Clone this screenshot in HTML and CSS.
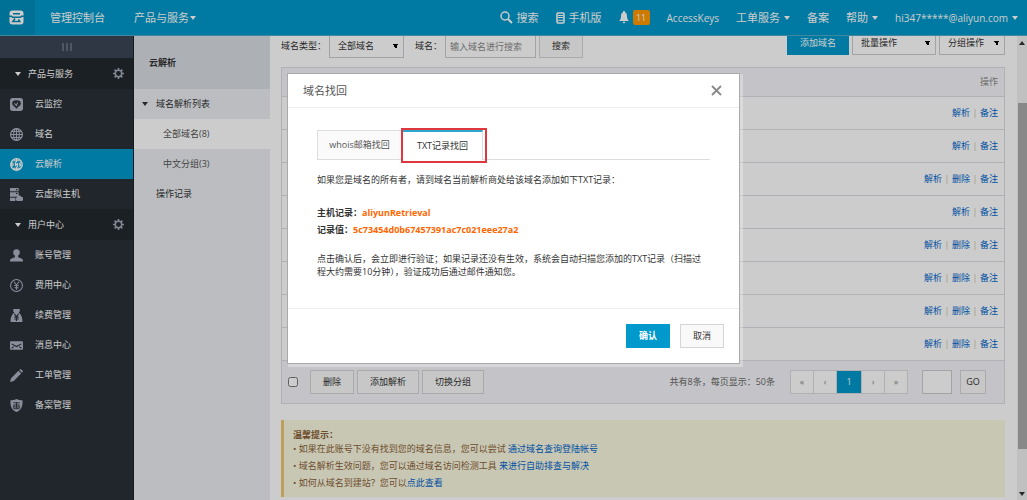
FILE: index.html
```html
<!DOCTYPE html>
<html lang="zh-CN">
<head>
<meta charset="utf-8">
<title>云解析</title>
<link rel="stylesheet" href="styles.css">
</head>
<body>
<header class="topbar">
  <a class="logo" href="#" aria-label="首页"><svg width="15" height="15" viewBox="0 0 15 15"><rect x=".5" y=".5" width="14" height="14" rx="3" fill="#fff"/><path d="M4 3.700h7M0 6.300h2.500l1 1h8l1-1H15M6 8.500l-2.200 3h7L9.500 9.300" fill="none" stroke="#0088b5" stroke-width="1.500"/></svg></a>
  <a class="nav-home" href="#">管理控制台</a>
  <a class="nav-products" href="#">产品与服务<i class="caret"></i></a>
  <nav class="top-right">
    <a href="#"><svg width="13" height="13" viewBox="0 0 13 13" fill="none" stroke="#fff"><circle cx="5" cy="5" r="4" stroke-width="1.500"/><path d="M8 8l4 4" stroke-width="2"/></svg>搜索</a>
    <a href="#"><svg width="9" height="12" viewBox="0 0 9 12"><rect x="1" y="1" width="7" height="10" rx="1" fill="none" stroke="#fff" stroke-width="1.600"/><path d="M2 3.500h5M2 5.500h5M2 8.300h5" stroke="#fff"/></svg>手机版</a>
    <a href="#"><svg width="10" height="13" viewBox="0 0 10 13" fill="#fff"><path d="M5 0a1 1 0 0 1 1 1.200C7.800 2 8 3.600 8 5.500 8 8 9 9 10 10H0c1-1 2-2 2-4.500C2 3.600 2.200 2 4 1.200A1 1 0 0 1 5 0zM3.700 10.700h2.600a1.300 1.500 0 0 1-2.600 0z"/></svg><span class="badge">11</span></a>
    <a href="#" class="latin">AccessKeys</a>
    <a href="#">工单服务<i class="caret"></i></a>
    <a href="#">备案</a>
    <a href="#">帮助<i class="caret"></i></a>
    <a href="#" class="latin">hi347*****@aliyun.com<i class="caret"></i></a>
  </nav>
</header>
<div class="layout">
  <aside class="sidebar">
    <button class="fold" aria-label="收起"><svg width="10" height="8" viewBox="0 0 10 8"><path d="M1 0v8M5 0v8M9 0v8" stroke="#8b96a8"/></svg></button>
    <h2><i class="caret"></i>产品与服务<svg class="gear" width="11" height="11" viewBox="0 0 11 11" fill="none" stroke="#a0abb8"><circle cx="5.500" cy="5.500" r="3.200" stroke-width="1.500"/><path d="M5.500 0v2M5.500 9v2M0 5.500h2M9 5.500h2M1.600 1.600l1.500 1.500M7.900 7.900l1.500 1.500M1.600 9.400l1.500-1.500M7.900 3.100l1.500-1.500" stroke-width="1.600"/></svg></h2>
    <a href="#"><svg viewBox="0 0 12 12"><rect width="12" height="12" rx="2.500" fill="#aab3c2"/><path d="M2 5a4 3 0 0 1 8 0c0 2-3 3-4 5-1-2-4-3-4-5z" fill="#293038"/><path d="M4 5l2 2 1-3" stroke="#aab3c2" fill="none"/></svg>云监控</a>
    <a href="#"><svg viewBox="0 0 12 12" fill="none" stroke="#aab3c2"><circle cx="6" cy="6" r="5.400" stroke-width="1.200"/><ellipse cx="6" cy="6" rx="2.600" ry="5.400"/><path d="M.6 6h10.800M6 .6v10.800M1.500 3.300h9M1.500 8.700h9"/></svg>域名</a>
    <a href="#" class="active"><svg viewBox="0 0 12 12"><circle cx="6" cy="6" r="5.300" fill="none" stroke="#fff" stroke-width="1.200"/><path d="M3 2.500h6M3 9.500h6M6 1v3M6 8v3" stroke="#fff"/><path d="M1.500 4.500v3c2 0 2-3 0-3M5 7.500v-3l2 3v-3M10.500 4.500C8 4.500 8.500 6 9.500 6s1 1.500-1 1.500" stroke="#fff" fill="none"/></svg>云解析</a>
    <a href="#"><svg viewBox="0 0 12 12" fill="#aab3c2"><path d="M0 0h8v3H0zM0 4h8v2.500L6 8H0zM0 9h5v3H0zM6.500 12a2 2 0 0 1-.2-3.500 2 2 0 0 1 3.900-.5A2 2 0 0 1 10.500 12z"/><path d="M5.500 1.500H7M5.500 5H7" stroke="#293038"/></svg>云虚拟主机</a>
    <h2><i class="caret"></i>用户中心<svg class="gear" width="11" height="11" viewBox="0 0 11 11" fill="none" stroke="#a0abb8"><circle cx="5.500" cy="5.500" r="3.200" stroke-width="1.500"/><path d="M5.500 0v2M5.500 9v2M0 5.500h2M9 5.500h2M1.600 1.600l1.500 1.500M7.900 7.900l1.500 1.500M1.600 9.400l1.500-1.500M7.900 3.100l1.500-1.500" stroke-width="1.600"/></svg></h2>
    <a href="#"><svg viewBox="0 0 12 12" fill="#aab3c2"><circle cx="6" cy="3.200" r="3"/><path d="M4.500 5h3v2.500L11 9c1 .5 1 1.500 1 2.500H0C0 10.500 0 9.500 1 9l3.500-1.500z"/></svg>账号管理</a>
    <a href="#"><svg viewBox="0 0 12 12" fill="none" stroke="#aab3c2"><circle cx="6" cy="6" r="5.500"/><path d="M3.700 2.500L6 5.500l2.300-3M6 5.500V10M4 6h4M4 8h4"/></svg>费用中心</a>
    <a href="#"><svg viewBox="0 0 12 12"><path d="M3 0h6v2L8 3.500c2 1 3.500 4 3.500 8.500H.5C.5 7.500 2 4.500 4 3.500L3 2z" fill="#aab3c2"/><path d="M4 4.500l2 2.500 2-2.500M6 7v4M4 7.500h4M4 9.300h4" stroke="#293038" fill="none"/></svg>续费管理</a>
    <a href="#"><svg viewBox="0 0 12 12"><rect y="2" width="12" height="8" rx="1" fill="#aab3c2"/><path d="M1.500 4.500L6 7l4.500-2.500M1.500 8.500l2-1.500M10.500 8.500l-2-1.500" stroke="#293038" fill="none"/></svg>消息中心</a>
    <a href="#"><svg viewBox="0 0 12 12" fill="#aab3c2"><path d="M0 12l1-3.500L7.800 1.700l2.500 2.500L3.500 11zM8.500 1l1-.8c.6-.4 2.700 1.600 2.300 2.300l-.8 1z"/></svg>工单管理</a>
    <a href="#"><svg viewBox="0 0 12 12"><path d="M6 0c2 1 4 1.200 5.500 1.200C12 6 10.500 10.500 6 12 1.500 10.500 0 6 .5 1.200 2 1.200 4 1 6 0z" fill="#aab3c2"/><path d="M3 3.500h6M3.500 5.500h5v3.500h-5zM6 3v6M3.500 7.300h5" stroke="#293038" stroke-width=".8" fill="none"/></svg>备案管理</a>
  </aside>
  <nav class="subnav">
    <h1>云解析</h1>
    <a href="#" class="group"><i class="caret"></i>域名解析列表</a>
    <a href="#" class="leaf current">全部域名(8)</a>
    <a href="#" class="leaf">中文分组(3)</a>
    <a href="#">操作记录</a>
  </nav>
  <main class="main">
    <div class="toolbar">
      <form class="filters">
        <label for="type">域名类型：</label>
        <select id="type"><option>全部域名</option></select>
        <label class="name-label" for="name">域名：</label>
        <input id="name" type="text" placeholder="输入域名进行搜索">
        <button type="button" class="btn">搜索</button>
      </form>
      <div class="actions">
        <button class="btn primary">添加域名</button>
        <select aria-label="批量操作" class="batch"><option>批量操作</option></select>
        <select aria-label="分组操作" class="grouping"><option>分组操作</option></select>
      </div>
    </div>
    <section class="panel">
      <table>
        <thead><tr><th>操作</th></tr></thead>
        <tbody>
          <tr><td><a href="#">解析</a><i>|</i><a href="#">备注</a></td></tr>
          <tr><td><a href="#">解析</a><i>|</i><a href="#">备注</a></td></tr>
          <tr><td><a href="#">解析</a><i>|</i><a href="#">删除</a><i>|</i><a href="#">备注</a></td></tr>
          <tr><td><a href="#">解析</a><i>|</i><a href="#">备注</a></td></tr>
          <tr><td><a href="#">解析</a><i>|</i><a href="#">删除</a><i>|</i><a href="#">备注</a></td></tr>
          <tr><td><a href="#">解析</a><i>|</i><a href="#">删除</a><i>|</i><a href="#">备注</a></td></tr>
          <tr><td><a href="#">解析</a><i>|</i><a href="#">删除</a><i>|</i><a href="#">备注</a></td></tr>
          <tr><td><a href="#">解析</a><i>|</i><a href="#">删除</a><i>|</i><a href="#">备注</a></td></tr>
        </tbody>
      </table>
      <div class="table-foot">
        <input type="checkbox" aria-label="全选">
        <div class="bulk">
          <button class="btn">删除</button>
          <button class="btn">添加解析</button>
          <button class="btn">切换分组</button>
        </div>
        <span class="summary">共有8条，每页显示：50条</span>
        <div class="pager">
          <button>«</button><button>‹</button><button class="on">1</button><button>›</button><button>»</button>
        </div>
        <input class="page-input" type="text" aria-label="页码">
        <button class="btn go">GO</button>
      </div>
    </section>
    <section class="notice">
      <h3>温馨提示：</h3>
      <ul>
        <li>如果在此账号下没有找到您的域名信息，您可以尝试 <a href="#">通过域名查询登陆帐号</a></li>
        <li>域名解析生效问题，您可以通过域名访问检测工具 <a href="#">来进行自助排查与解决</a></li>
        <li>如何从域名到建站？您可以<a href="#">点此查看</a></li>
      </ul>
    </section>
  </main>
  <div class="scrollbar"><i class="arrow up"></i><div class="thumb"></div><i class="arrow down"></i></div>
</div>
<div class="overlay">
  <section class="modal" role="dialog" aria-labelledby="dialog-title">
    <div class="modal-head">
      <h2 id="dialog-title">域名找回</h2>
      <button class="close" aria-label="关闭"><svg width="11" height="11" viewBox="0 0 11 11"><path d="M1 1l9 9M10 1l-9 9" stroke="#888" stroke-width="1.800"/></svg></button>
    </div>
    <div class="modal-body">
      <div class="tabs" role="tablist">
        <button role="tab" class="tab">whois邮箱找回</button>
        <div class="marked"><button role="tab" class="tab selected" aria-selected="true">TXT记录找回</button></div>
      </div>
      <p>如果您是域名的所有者，请到域名当前解析商处给该域名添加如下TXT记录：</p>
      <dl>
        <div><dt>主机记录：</dt><dd>aliyunRetrieval</dd></div>
        <div><dt>记录值：</dt><dd>5c73454d0b67457391ac7c021eee27a2</dd></div>
      </dl>
      <p class="hint">点击确认后，会立即进行验证；如果记录还没有生效，系统会自动扫描您添加的TXT记录（扫描过程大约需要10分钟），验证成功后通过邮件通知您。</p>
    </div>
    <div class="modal-foot">
      <button class="btn primary confirm">确认</button>
      <button class="btn cancel">取消</button>
    </div>
  </section>
</div>
</body>
</html>
```
FILE: styles.css
```css
* { box-sizing: border-box; }
body {
  margin: 0;
  height: 100vh;
  display: flex;
  flex-direction: column;
  overflow: hidden;
  background: #fff;
  color: #333;
  font: 9px/12px "Open Sans", "Noto Sans CJK SC", sans-serif;
}
a { color: #06c; text-decoration: none; }
h1, h2, h3, p, ul, dl, dd { margin: 0; padding: 0; }
i { font-style: normal; }
button, input, select { font: inherit; color: inherit; margin: 0; border-radius: 0; }
button { padding: 0; border: 0; background: none; }
.caret {
  display: inline-block;
  border: 3px solid transparent;
  border-top: 4px solid currentColor;
  border-bottom: 0;
}

.topbar {
  flex: none;
  height: 36px;
  display: flex;
  align-items: center;
  position: relative;
  z-index: 1;
  background: #09c;
  border-bottom: 1px solid #4eabc9;
  padding-right: 9px;
  font-size: 11px;
  white-space: nowrap;
}
.topbar a { color: #fff; display: flex; align-items: center; gap: 4px; }
.topbar .logo { width: 35px; height: 35px; padding-left: 9px; background: #008ebc; }
.topbar .latin { font-size: 10px; }
.nav-home { margin-left: 15px; }
.nav-products { margin-left: 29px; }
.topbar .nav-products { gap: 1px; }
.top-right { margin-left: auto; display: flex; align-items: center; gap: 17px; }
.badge { background: #f90; border-radius: 2px; height: 15px; line-height: 15px; width: 17px; font-size: 9px; text-align: center; }

.layout { flex: 1; min-height: 0; display: flex; }
.sidebar { flex: none; width: 134px; background: #293038; color: #fff; border-right: 1px solid #1c2026; }
.fold { display: flex; width: 100%; height: 22px; align-items: center; justify-content: center; background: #3b4556; }
.sidebar h2 {
  display: flex;
  align-items: center;
  height: 31px;
  padding: 0 9px 0 15px;
  background: #22282e;
  font-size: 9px;
  font-weight: 400;
}
.sidebar h2 .caret { margin-right: 7px; }
.gear { margin-left: auto; }
.sidebar a { display: flex; align-items: center; gap: 12px; height: 30px; padding-left: 10px; color: #fff; }
.sidebar a svg { width: 13px; height: 13px; }
.sidebar .active { background: #09c; }

.subnav { flex: none; width: 136px; background: #eaedf1; }
.subnav h1 { height: 53px; padding-left: 15px; line-height: 53px; font-size: 9px; font-weight: 700; background: #d9dee4; }
.subnav a { display: flex; align-items: center; height: 30px; padding-left: 22px; color: #333; }
.subnav .group { padding-left: 8px; gap: 8px; }
.subnav .leaf { padding-left: 29px; color: #555; }
.subnav .current { background: #fff; }

.main { flex: 1; min-width: 0; padding: 0 12px 0 11px; }
.toolbar { display: flex; justify-content: space-between; align-items: flex-start; height: 31px; }
.filters, .actions { display: flex; align-items: center; }
.filters { margin-top: -2px; }
.actions { margin-top: -5px; gap: 3px; }
.toolbar select, .toolbar input { height: 24px; border: 1px solid #ccc; background: #fff; padding: 0 8px; }
.toolbar select {
  appearance: none;
  width: 75px;
  background: linear-gradient(to bottom right, #000 50%, transparent 50%) right 5px center / 2px 5px no-repeat, linear-gradient(to bottom left, #000 50%, transparent 50%) right 7px center / 3px 5px no-repeat, #fff;
}
.toolbar .batch { width: 84px; }
.toolbar .grouping { width: 66px; }
.toolbar .filters input { width: 91px; padding: 0 4px; margin-left: 3px; }
.filters select { margin-left: 3px; }
.name-label { margin-left: 11px; }
.filters .btn { width: 44px; margin-left: 3px; }
.btn { height: 24px; border: 1px solid #d5d5d5; background: #f9f9f9; padding: 0 12px; }
.btn.primary { background: #09c; border-color: #09c; color: #fff; }
.actions .btn { width: 62px; }
input::placeholder { color: #888; opacity: 1; }

.panel { border: 1px solid #dcdde4; }
table { width: 100%; border-collapse: collapse; text-align: right; }
th { height: 28px; padding: 0 6px; background: #f5f6fa; color: #888; font-weight: 400; }
td { height: 33px; padding: 0 6px; border-top: 1px solid #dcdde4; }
td i { display: inline-block; width: 10px; text-align: center; color: #ccb9a4; }
.table-foot { display: flex; align-items: center; height: 43px; padding: 0 18px 0 6px; border-top: 1px solid #dcdde4; background: #f5f6fa; }
.table-foot [type="checkbox"] { width: 10px; height: 10px; }
.bulk { display: flex; gap: 3px; margin-left: 12px; }
.summary { margin-left: auto; color: #666; }
.pager { display: flex; margin: 0 14px 0 15px; border: 1px solid #ddd; border-right: 0; }
.pager button { width: 23px; height: 22px; border-right: 1px solid #ddd; background: #fff; color: #888; }
.pager .on { width: 25px; background: #09c; color: #fff; }
.page-input { width: 30px; height: 24px; border: 1px solid #ccc; background: #fff; }
.go { width: 26px; margin-left: 8px; padding: 0; }

.notice { margin-top: 16px; padding: 9px 9px 6px; border-left: 3px solid #efc773; background: #fbf9e1; color: #8a6238; }
.notice h3 { font-size: 9px; line-height: 11px; }
.notice ul { list-style: none; }
.notice li { line-height: 17px; }
.notice li::before { content: "• "; }

.scrollbar { flex: none; width: 10px; display: flex; flex-direction: column; align-items: center; background: #f1f1f1; padding: 5px 0 4px; }
.scrollbar .thumb { width: 9px; flex: 1; margin: 58px 0 43px; background: #aaa; }
.arrow { border: 3px solid transparent; }
.up { border-top: 0; border-bottom: 4px solid #333; }
.down { border-bottom: 0; border-top: 4px solid #333; }

.overlay { position: absolute; inset: 0; z-index: 2; padding: 73px 16px 0; background: rgba(0, 0, 0, .2); }
.modal { max-width: 453px; margin: 0 auto; background: #fff; border: 1px solid #aaa; box-shadow: 2px 2px 0 1px rgba(255, 255, 255, .3); }
.modal-head { display: flex; align-items: center; justify-content: space-between; height: 34px; padding: 0 17px 0 15px; border-bottom: 1px solid #eee; }
.modal-head h2 { font-size: 11px; font-weight: 400; color: #555; }
.close { display: flex; }
.modal-body { padding: 22px 29px 30px; }
.tabs { display: flex; height: 30px; border-bottom: 1px solid #ddd; }
.tab { width: 85px; height: 30px; border: 1px solid #ddd; background: #fafafa; color: #555; white-space: nowrap; }
.tab.selected { width: 81px; background: #fff; color: #333; border-top: 2px solid #2ba8cf; border-bottom: 0; }
.marked { position: relative; }
.marked::after { content: ""; position: absolute; inset: -2px -4px -4px -1px; border: 2px solid #e0373f; }
.modal-body p { margin-top: 14px; }
.modal-body dl { margin-top: 18px; font-weight: 700; line-height: 17px; }
.modal-body dl div { display: flex; }
.modal-body dd { color: #f60; }
.modal-body .hint { margin-top: 14px; line-height: 13px; }
.modal-foot { display: flex; justify-content: flex-end; gap: 10px; padding: 15px; border-top: 1px solid #eee; }
.modal-foot .btn { width: 44px; }
.confirm { font-weight: 700; }
```
